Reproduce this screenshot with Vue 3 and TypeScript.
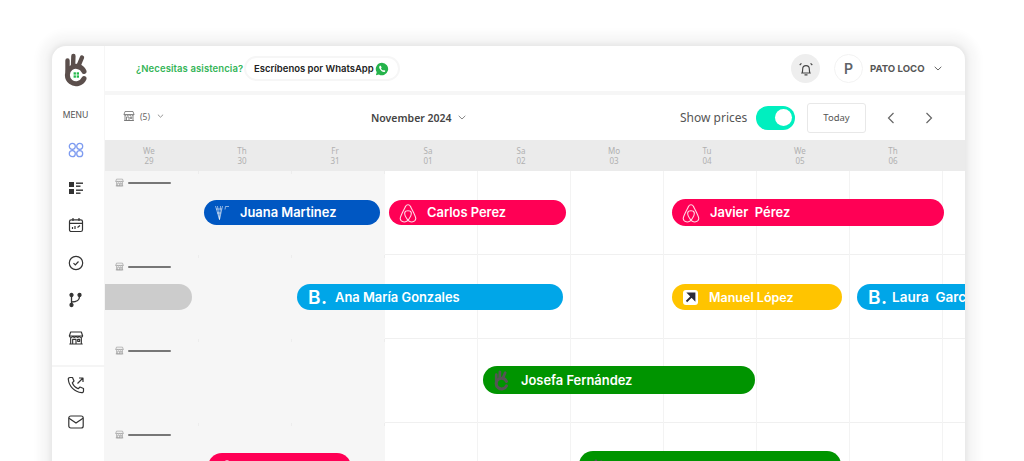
<script setup lang="ts">
interface Day { name: string; num: string }
interface Booking {
  name: string; icon: string; color: string; x: number; y: number;
  w: number; h: number; gap: number; size?: number
}
const days: Day[] = [
  { name: 'We', num: '29' }, { name: 'Th', num: '30' }, { name: 'Fr', num: '31' },
  { name: 'Sa', num: '01' }, { name: 'Sa', num: '02' }, { name: 'Mo', num: '03' },
  { name: 'Tu', num: '04' }, { name: 'We', num: '05' }, { name: 'Th', num: '06' }
]
const rows: Booking[][] = [
  [
    { name: 'Juana Martinez', icon: 'fan', color: '#0057c2', x: 99, y: 29, w: 176, h: 25, gap: 36 },
    { name: 'Carlos Perez', icon: 'air', color: '#ff0055', x: 284, y: 29, w: 177, h: 25, gap: 38 },
    { name: 'Javier  Pérez', icon: 'air', color: '#ff0055', x: 567, y: 28, w: 272, h: 27, gap: 38 }
  ],
  [
    { name: '', icon: '', color: '#cccccc', x: -30, y: 29, w: 117, h: 26, gap: 0 },
    { name: 'Ana María Gonzales', icon: 'b', color: '#00a6e8', x: 192, y: 29, w: 266, h: 26, gap: 38 },
    { name: 'Manuel López', icon: 'arrow', color: '#ffc400', x: 567, y: 29, w: 170, h: 26, gap: 37, size: 12.5 },
    { name: 'Laura  Garcia', icon: 'b', color: '#00a6e8', x: 752, y: 29, w: 170, h: 26, gap: 35, size: 13.5 }
  ],
  [
    { name: 'Josefa Fernández', icon: 'hand', color: '#009400', x: 378, y: 27, w: 272, h: 28, gap: 38 }
  ],
  [
    { name: 'Rosa Martínez', icon: 'air', color: '#ff0055', x: 103, y: 30, w: 143, h: 32, gap: 38 },
    { name: 'Pedro Sánchez', icon: 'hand', color: '#009400', x: 474, y: 28, w: 262, h: 36, gap: 38 }
  ]
]
const cells = Array.from({ length: 10 }, (_, i) => i)
</script>

<template>
  <div class="page">
    <svg class="defs" aria-hidden="true">
      <symbol id="store" viewBox="0 0 24 24">
        <path d="M4 3h16l2 6a2.6 2.6 0 0 1-5 .5 2.8 2.8 0 0 1-5 0 2.8 2.8 0 0 1-5 0 2.6 2.6 0 0 1-5-.5zM2 9h20M4 12v9h16v-9M2 21h20M7 21v-7h5v7M14.500 14h3v3h-3z" fill="none" stroke="currentColor" stroke-width="1.700" stroke-linejoin="round"/>
      </symbol>
      <symbol id="air" viewBox="0 0 24 24">
        <path d="M12 20C9 23 4 22 3.500 18 3.300 16 5 13 9.500 4.500c1-2 4-2 5 0C19 13 20.700 16 20.500 18 20 22 15 23 12 20zm0 0C9 16 8 13 8.500 11.500c.6-2.500 6.400-2.500 7 0C16 13 15 16 12 20z" fill="none" stroke="#fff" stroke-opacity=".85" stroke-width="1.200"/>
      </symbol>
      <symbol id="hand" viewBox="0 0 24 34">
        <path d="M3.500 18V7.500M9 14l.4-11M14 14 18 4.500" stroke="currentColor" stroke-width="4.400" stroke-linecap="round" fill="none"/>
        <path d="M20 18.400A8.700 8.700 0 1 0 20 25.600" stroke="currentColor" stroke-width="5" stroke-linecap="round" fill="none"/>
      </symbol>
    </svg>

    <div class="window">
      <aside class="side">
        <svg class="logo" width="24" height="34" viewBox="0 0 24 34">
          <use href="#hand" color="#5b4f4c"/>
          <rect x="9.600" y="19.300" width="2.300" height="2.300" fill="#22b84a"/>
          <rect x="12.700" y="19.300" width="2.300" height="2.300" fill="#22b84a"/>
          <rect x="9.600" y="22.400" width="2.300" height="2.300" fill="#22b84a"/>
          <rect x="12.700" y="22.400" width="2.300" height="2.300" fill="#22b84a"/>
        </svg>
        <div class="menu">MENU</div>
        <div class="nav">
          <svg width="16" height="16" viewBox="0 0 16 16" fill="none" stroke="#7d9bf0" stroke-width="1.300">
            <circle cx="4.300" cy="4.300" r="3"/><circle cx="11.700" cy="4.300" r="3"/>
            <circle cx="4.300" cy="11.700" r="3"/><circle cx="11.700" cy="11.700" r="3"/>
          </svg>
          <svg width="16" height="16" viewBox="0 0 16 16" fill="#333">
            <rect x="1" y="2" width="5" height="5"/><rect x="1" y="9" width="5" height="5"/>
            <rect x="8" y="2.500" width="7" height="1.400"/><rect x="8" y="5.500" width="4.500" height="1.400"/>
            <rect x="8" y="9.500" width="7" height="1.400"/><rect x="8" y="12.500" width="4.500" height="1.400"/>
          </svg>
          <svg width="16" height="16" viewBox="0 0 16 16" fill="none" stroke="#333" stroke-width="1.200">
            <rect x="1.500" y="2.800" width="13" height="11.700" rx="1.800"/>
            <path d="M1.500 6.300h13M5 1v3M11 1v3M4.500 12v-2M7 12v-3M9.500 10.500 12 8.500"/>
          </svg>
          <svg width="16" height="16" viewBox="0 0 16 16" fill="none" stroke="#333" stroke-width="1.200">
            <circle cx="8" cy="8" r="6.700"/><path d="M5.500 8.200 7.300 10l3.200-3.500"/>
          </svg>
          <svg width="16" height="16" viewBox="0 0 16 16" fill="none" stroke="#333" stroke-width="1.300">
            <path d="M3.500 4.500v7M3.500 10c5 0 8-1.500 8-5.500"/>
            <circle cx="3.500" cy="3" r="1.500" fill="#333"/><circle cx="3.500" cy="13" r="1.500" fill="#333"/><circle cx="11.500" cy="3" r="1.500" fill="#333"/>
          </svg>
          <svg width="16" height="16" color="#333"><use href="#store"/></svg>
        </div>
        <div class="nav2">
          <svg width="18" height="18" viewBox="0 0 18 18" fill="none" stroke="#333" stroke-width="1.200" stroke-linejoin="round">
            <path d="M3 1.500h2.500L7 5 5.300 6.800c.9 2.500 3 4.800 5.900 5.900L13 11l3.500 1.500V15c0 1-.8 1.800-1.800 1.700C7.500 16 2 10.500 1.300 3.300 1.200 2.300 2 1.500 3 1.500z"/>
            <path d="M10.500 7.500 16 2M12 2h4v4"/>
          </svg>
          <svg width="16" height="14" viewBox="0 0 16 14" fill="none" stroke="#333" stroke-width="1.200">
            <rect x=".8" y="1" width="14.400" height="12" rx="2"/><path d="M1 3.200 8 8l7-4.800"/>
          </svg>
        </div>
      </aside>

      <main class="main">
        <header class="head">
          <span class="help">¿Necesitas asistencia?</span>
          <span class="pill">
            Escríbenos por WhatsApp
            <svg width="14" height="14" viewBox="0 0 14 14">
              <path d="M7 .8a6.200 6.200 0 0 0-5.300 9.400L.9 13.200l3-.8A6.200 6.200 0 1 0 7 .8z" fill="#25b34b"/>
              <path d="M4.800 3.800c-.9.700-.8 2 .2 3.500s2.400 2.700 3.900 2.700c.8 0 1.400-.5 1.400-1.300L8.900 7.900l-.8.600C7.200 8 6.400 7.200 6 6.400l.6-.8-.8-1.800z" fill="#fff"/>
            </svg>
          </span>
          <span class="bell">
            <svg width="16" height="16" viewBox="0 0 14 14" fill="none" stroke="#444" stroke-width="1">
              <path d="M3.500 10.500c.6-1 .6-2 .6-3.500a2.900 2.900 0 0 1 5.800 0c0 1.500 0 2.500.6 3.500zM5.700 12.200h2.600M1.500 3.500 3 2M12.500 3.500 11 2"/>
            </svg>
          </span>
          <span class="avatar">P</span>
          <span class="user">PATO LOCO</span>
          <svg class="chev" width="8" height="5" viewBox="0 0 8 5" fill="none" stroke="#666" stroke-width="1"><path d="M.7.8 4 4 7.300.8"/></svg>
        </header>

        <div class="tools">
          <svg class="store-top" width="12" height="12" color="#777"><use href="#store"/></svg>
          <span class="count">(5)</span>
          <svg class="small-chev" width="7" height="4" viewBox="0 0 8 5" fill="none" stroke="#777" stroke-width="1"><path d="M.7.8 4 4 7.300.8"/></svg>
          <span class="month">November 2024</span>
          <svg width="8" height="5" viewBox="0 0 8 5" fill="none" stroke="#888" stroke-width="1"><path d="M.7.8 4 4 7.300.8"/></svg>
          <span class="prices">Show prices</span>
          <span class="toggle"><i></i></span>
          <button class="today">Today</button>
          <svg class="arrow first" width="8" height="12" viewBox="0 0 8 12" fill="none" stroke="#666" stroke-width="1.200"><path d="M6.500 1 1.500 6l5 5"/></svg>
          <svg class="arrow" width="8" height="12" viewBox="0 0 8 12" fill="none" stroke="#666" stroke-width="1.200"><path d="M1.500 1l5 5-5 5"/></svg>
        </div>

        <div class="days">
          <div v-for="d in days" :key="d.name + d.num" class="day">{{ d.name }}<br>{{ d.num }}</div>
        </div>

        <div v-for="(row, r) in rows" :key="r" class="row">
          <div v-for="c in cells" :key="c" class="cell" :class="{ past: c < 3 }"></div>
          <div class="tag">
            <svg width="9" height="9" color="#999"><use href="#store"/></svg>
            <span class="rule"></span>
          </div>
          <div
            v-for="b in row"
            :key="b.name + b.x"
            class="bar"
            :style="{ left: b.x + 'px', top: b.y + 'px', width: b.w + 'px', height: b.h + 'px', background: b.color }"
          >
            <span v-if="b.icon" class="slot">
              <svg v-if="b.icon === 'air'" class="air" width="22" height="22"><use href="#air"/></svg>
              <span v-else-if="b.icon === 'b'" class="booking">B.</span>
              <svg v-else-if="b.icon === 'fan'" width="15" height="14" viewBox="0 0 15 14" fill="none" stroke="#fff" stroke-opacity=".55" stroke-width="1">
                <path d="M.5 0 4.500 13.500 7.500 0M2.500 0 4.500 13.500 5.500 0M1 3h6M2 7h4M10 3.500 10.500.5H14"/>
              </svg>
              <svg v-else-if="b.icon === 'arrow'" width="15" height="15" viewBox="0 0 15 15">
                <rect width="15" height="15" rx="3" fill="#fff"/>
                <path d="M3.500 11.500 10 5M5.500 3.500h6v6z" stroke="#2b2b3a" stroke-width="1.800" fill="#2b2b3a"/>
              </svg>
              <svg v-else-if="b.icon === 'hand'" width="15" height="21" color="#555"><use href="#hand"/></svg>
            </span>
            <span v-if="b.name" class="label" :style="{ left: b.gap + 'px', fontSize: b.size ? b.size + 'px' : undefined }">{{ b.name }}</span>
          </div>
        </div>
      </main>
    </div>
  </div>
</template>

<style>
html, body { margin: 0; background: #fff; }
</style>

<style scoped>
.page { height: 461px; overflow: hidden; padding: 46px 0 0 52px; box-sizing: border-box; background: #fff; position: relative; }
.defs { position: absolute; width: 0; height: 0; }
.window { width: 913px; height: 520px; display: flex; background: #fff; border-radius: 14px 14px 0 0; box-shadow: 0 0 5px 3px rgba(0,0,0,.06), 0 0 8px 13px rgba(0,0,0,.035); }
.side { width: 53px; flex: none; display: flex; flex-direction: column; align-items: center; padding-right: 5px; border-right: 1px solid #f6f6f6; box-sizing: border-box; }
.logo { margin: 7px 0 0 1px; flex: none; }
.menu { margin-top: 23px; font: 400 8.500px "Inter", sans-serif; color: #555; flex: none; }
.nav { margin-top: 22px; display: flex; flex-direction: column; align-items: center; gap: 21.500px; height: 223px; width: 100%; flex: none; }
.nav2 { flex: none; display: flex; flex-direction: column; align-items: center; margin-right: -5px; width: 53px; padding: 9px 5px 0 0; box-sizing: border-box; border-top: 2px solid #f5f5f5; gap: 21px; }
.main { width: 860px; display: flex; flex-direction: column; overflow: hidden; border-radius: 0 14px 0 0; }
.head { height: 45px; flex: none; display: flex; align-items: center; padding-left: 31px; border-bottom: 4px solid #f6f6f6; box-sizing: content-box; font-family: "Inter", sans-serif; }
.help { color: #35b558; font-size: 9.500px; font-weight: 600; width: 108px; white-space: nowrap; letter-spacing: .1px; }
.pill { height: 25px; width: 156px; border: 2px solid #f6f6f6; border-radius: 14px; display: flex; align-items: center; gap: 1px; padding-left: 8px; box-sizing: border-box; font-size: 9.500px; font-weight: 600; color: #222; white-space: nowrap; }
.bell { width: 29px; height: 29px; border-radius: 50%; background: #eeeeee; display: flex; align-items: center; justify-content: center; margin-left: 391px; }
.avatar { width: 29px; height: 29px; box-sizing: border-box; border: 1px solid #f2f2f2; border-radius: 50%; margin-left: 14px; display: flex; align-items: center; justify-content: center; color: #5f6368; font: 600 14px "Inter", sans-serif; }
.user { margin-left: 7px; font-size: 9.600px; font-weight: 700; color: #555; white-space: nowrap; }
.chev { margin-left: 9px; }
.tools { height: 45px; flex: none; display: flex; align-items: center; font-family: "Noto Sans", sans-serif; position: relative; }
.store-top { margin: -3px 0 0 18px; }
.count { font-size: 8.500px; color: #666; margin: -3px 6px 0 5px; width: 11px; }
.small-chev { margin-top: -3px; }
.month { margin-left: 207px; font-size: 10.500px; font-weight: 600; color: #444; white-space: nowrap; width: 87px; }
.prices { margin-left: 214px; font-size: 12px; color: #555; white-space: nowrap; width: 76px; }
.toggle { width: 39px; height: 24px; border-radius: 12px; background: #00efbf; display: flex; align-items: center; justify-content: flex-end; padding-right: 3px; box-sizing: border-box; }
.toggle i { width: 17px; height: 17px; border-radius: 50%; background: #fff; }
.today { width: 59px; height: 30px; margin-left: 12px; background: #fff; border: 1px solid #e8e8e8; border-radius: 3px; font: 400 9.500px "Noto Sans", sans-serif; color: #555; padding: 0; }
.arrow { margin-left: 30px; }
.arrow.first { margin-left: 21px; }
.days { height: 31px; flex: none; background: #ebebeb; display: flex; }
.day { width: 93px; flex: none; box-sizing: border-box; padding: 6px 5px 0 0; text-align: center; font: 400 8px/10px "Noto Sans", sans-serif; color: #b0b0b0; }
.row { height: 84px; flex: none; display: flex; position: relative; overflow: hidden; box-shadow: inset 0 -1px 0 #f0f0f0; }
.cell { width: 93px; flex: none; box-sizing: border-box; border-right: 1px solid #f3f3f3; position: relative; }
.cell:first-child { width: 94px; }
.cell.past { background: #f6f6f6; border-right-color: #f6f6f6; }
.cell.past::after { content: ""; position: absolute; right: -1px; top: 0; width: 1px; height: 3px; background: #ededed; }
.tag { position: absolute; left: 10px; top: 7px; display: flex; align-items: center; gap: 4px; }
.rule { width: 43px; height: 2px; border-radius: 1px; background: #777; }
.bar { position: absolute; border-radius: 14px; display: flex; align-items: center; padding-left: 11px; box-sizing: border-box; color: #fff; }
.slot { display: flex; align-items: center; }
.air { margin-left: -3px; }
.booking { font: 600 19px "Inter", sans-serif; letter-spacing: .5px; }
.label { position: absolute; font: 600 12.900px "Inter", sans-serif; white-space: pre; }
</style>
